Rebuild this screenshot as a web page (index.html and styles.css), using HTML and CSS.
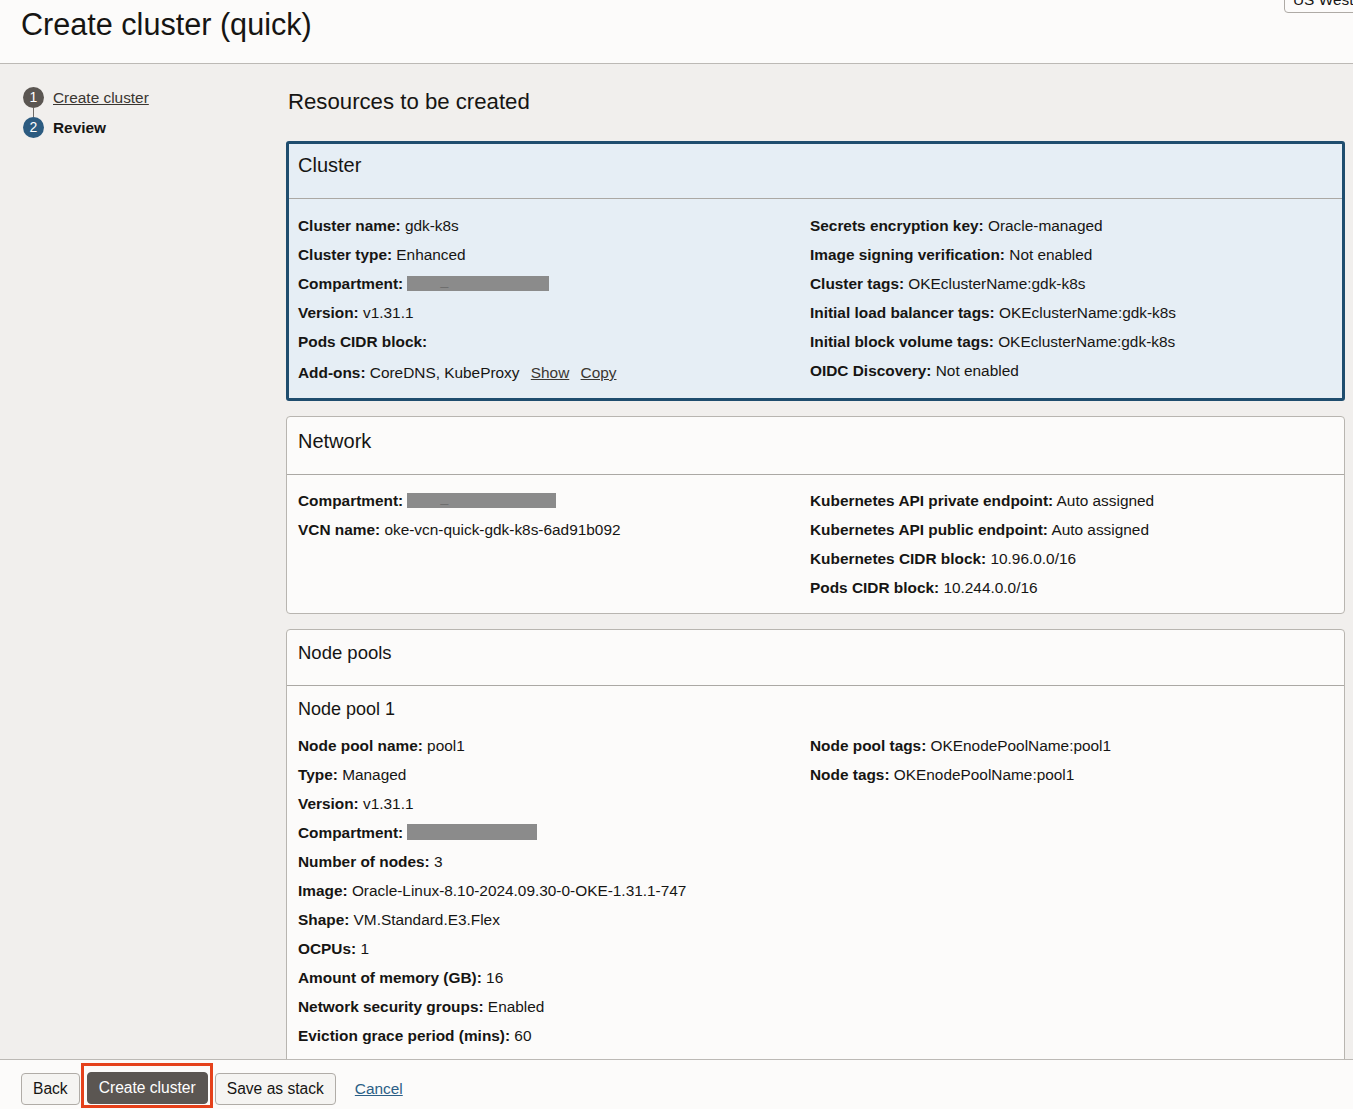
FILE: index.html
```html
<!DOCTYPE html>
<html lang="en">
<head>
<meta charset="utf-8">
<title>Create cluster (quick)</title>
<link rel="stylesheet" href="styles.css">
</head>
<body>
<header class="page-header">
  <h1 class="page-title">Create cluster (quick)</h1>
  <div class="region-select">US West (Phoenix)</div>
</header>
<div class="layout">
  <nav class="steps">
    <div class="step">
      <span class="step-num step-done">1</span>
      <a class="step-link" href="#">Create cluster</a>
    </div>
    <div class="step-line"></div>
    <div class="step">
      <span class="step-num step-current">2</span>
      <span class="step-active">Review</span>
    </div>
  </nav>
  <main class="content">
    <h2 class="section-title">Resources to be created</h2>

    <section class="panel panel-selected">
      <div class="panel-head">Cluster</div>
      <div class="panel-body grid">
        <div class="col">
          <div class="row"><b>Cluster name:</b> gdk-k8s</div>
          <div class="row"><b>Cluster type:</b> Enhanced</div>
          <div class="row"><b>Compartment:</b> <span class="redact redact-a"><span class="redact-mark">_</span></span></div>
          <div class="row"><b>Version:</b> v1.31.1</div>
          <div class="row"><b>Pods CIDR block:</b></div>
          <div class="row row-low"><b>Add-ons:</b> CoreDNS, KubeProxy <a class="mini-link" href="#">Show</a> <a class="mini-link" href="#">Copy</a></div>
        </div>
        <div class="col">
          <div class="row"><b>Secrets encryption key:</b> Oracle-managed</div>
          <div class="row"><b>Image signing verification:</b> Not enabled</div>
          <div class="row"><b>Cluster tags:</b> OKEclusterName:gdk-k8s</div>
          <div class="row"><b>Initial load balancer tags:</b> OKEclusterName:gdk-k8s</div>
          <div class="row"><b>Initial block volume tags:</b> OKEclusterName:gdk-k8s</div>
          <div class="row"><b>OIDC Discovery:</b> Not enabled</div>
        </div>
      </div>
    </section>

    <section class="panel panel-network">
      <div class="panel-head">Network</div>
      <div class="panel-body grid">
        <div class="col">
          <div class="row"><b>Compartment:</b> <span class="redact redact-b"><span class="redact-mark">_</span></span></div>
          <div class="row"><b>VCN name:</b> oke-vcn-quick-gdk-k8s-6ad91b092</div>
        </div>
        <div class="col">
          <div class="row"><b>Kubernetes API private endpoint:</b> Auto assigned</div>
          <div class="row"><b>Kubernetes API public endpoint:</b> Auto assigned</div>
          <div class="row"><b>Kubernetes CIDR block:</b> 10.96.0.0/16</div>
          <div class="row"><b>Pods CIDR block:</b> 10.244.0.0/16</div>
        </div>
      </div>
    </section>

    <section class="panel panel-pools">
      <div class="panel-head">Node pools</div>
      <div class="panel-body">
        <h3 class="sub-title">Node pool 1</h3>
        <div class="grid">
          <div class="col">
            <div class="row"><b>Node pool name:</b> pool1</div>
            <div class="row"><b>Type:</b> Managed</div>
            <div class="row"><b>Version:</b> v1.31.1</div>
            <div class="row"><b>Compartment:</b> <span class="redact redact-c"></span></div>
            <div class="row"><b>Number of nodes:</b> 3</div>
            <div class="row"><b>Image:</b> Oracle-Linux-8.10-2024.09.30-0-OKE-1.31.1-747</div>
            <div class="row"><b>Shape:</b> VM.Standard.E3.Flex</div>
            <div class="row"><b>OCPUs:</b> 1</div>
            <div class="row"><b>Amount of memory (GB):</b> 16</div>
            <div class="row"><b>Network security groups:</b> Enabled</div>
            <div class="row"><b>Eviction grace period (mins):</b> 60</div>
            <div class="row"><b>Force terminate after grace period:</b> Not enabled</div>
            <div class="row"><b>Kubernetes labels:</b> name:pool1</div>
          </div>
          <div class="col">
            <div class="row"><b>Node pool tags:</b> OKEnodePoolName:pool1</div>
            <div class="row"><b>Node tags:</b> OKEnodePoolName:pool1</div>
          </div>
        </div>
      </div>
    </section>
  </main>
</div>
<footer class="page-footer">
  <button class="btn" type="button">Back</button>
  <span class="highlight"><button class="btn btn-primary" type="button">Create cluster</button></span>
  <button class="btn" type="button">Save as stack</button>
  <a class="cancel-link" href="#">Cancel</a>
</footer>
</body>
</html>
```

FILE: styles.css
```css
* { box-sizing: border-box; }

html, body {
  margin: 0;
  height: 100%;
}

body {
  display: flex;
  flex-direction: column;
  overflow: hidden;
  background: #f1efed;
  color: #161513;
  font-family: "Liberation Sans", Arial, Helvetica, sans-serif;
  font-size: 15.4px;
}

.page-header {
  position: relative;
  height: 64px;
  flex: 0 0 64px;
  background: #fcfbfa;
  border-bottom: 1px solid #bcb9b5;
  padding: 6px 21px 0;
  overflow: hidden;
}

.page-title {
  margin: 0;
  font-size: 30.6px;
  font-weight: normal;
  line-height: 36px;
  color: #161513;
}

.region-select {
  position: absolute;
  top: -12px;
  left: 1284px;
  width: 140px;
  height: 25px;
  border: 1px solid #aeaaa5;
  border-radius: 4px;
  background: #fcfbfa;
  padding: 2px 8px 0;
  font-size: 15.4px;
  line-height: 18px;
  white-space: nowrap;
}

.layout {
  flex: 1 1 auto;
  display: flex;
  overflow: hidden;
  min-height: 0;
}

.steps {
  flex: 0 0 286px;
  padding: 23px 0 0 23px;
}

.step {
  display: flex;
  align-items: center;
  height: 21px;
}

.step-line {
  width: 1px;
  height: 9px;
  margin-left: 10px;
  background: #6f6a66;
}

.step-num {
  width: 21px;
  height: 21px;
  border-radius: 50%;
  color: #fff;
  font-size: 14px;
  line-height: 21px;
  text-align: center;
  margin-right: 9px;
}

.step-done { background: #5b5652; }
.step-current { background: #2c5b80; }

.step-link {
  color: #3a3631;
  text-decoration: underline;
}

.step-active {
  font-weight: bold;
}

.content {
  flex: 1 1 auto;
  padding: 24px 8px 0 0;
  min-width: 0;
}

.section-title {
  margin: 0 0 25px 2px;
  font-size: 22.2px;
  font-weight: normal;
  line-height: 28px;
}

.panel {
  background: #fcfbfa;
  border: 1px solid #b8b5b0;
  border-radius: 4px;
  margin-bottom: 15px;
}

.panel-selected {
  background: #e6eef5;
  border: 3px solid #1f4d6e;
  border-radius: 3px;
}

.panel-head {
  height: 58px;
  padding: 12px 11px 0;
  font-size: 20px;
  line-height: 24px;
  border-bottom: 1px solid #aba8a4;
}

.panel-selected .panel-head {
  height: 55px;
  padding: 9px 9px 0;
}

.panel-pools .panel-head {
  height: 56px;
  padding-top: 11px;
  font-size: 18.5px;
}

.panel-body {
  padding: 11px 11px 11px;
}

.panel-selected .panel-body {
  padding: 12px 9px 13px;
}

.panel-pools .panel-body {
  padding-top: 11px;
}

.grid {
  display: grid;
  grid-template-columns: 512px 1fr;
}

.row {
  line-height: 29px;
  white-space: nowrap;
}

.row b {
  font-weight: bold;
}

.row-low {
  position: relative;
  top: 2px;
}

.mini-link {
  color: #3a3631;
  text-decoration: underline;
  margin-left: 7px;
}

.redact {
  display: inline-block;
  position: relative;
  height: 15px;
  vertical-align: -2px;
  background: #8b8b8b;
}

.redact-mark {
  position: absolute;
  left: 33px;
  top: -3px;
  color: #6e6e6e;
  font-size: 14px;
  line-height: 15px;
}

.redact-a { width: 142px; }
.redact-b { width: 149px; }
.redact-c { width: 130px; height: 16px; }

.sub-title {
  margin: 0 0 10px;
  font-size: 18px;
  font-weight: normal;
  line-height: 24px;
}

.page-footer {
  flex: 0 0 50px;
  height: 50px;
  background: #fcfbfa;
  border-top: 1px solid #bcb9b5;
  display: flex;
  align-items: flex-start;
  padding: 13px 0 0 21px;
}

.btn {
  height: 32px;
  margin: 0;
  padding: 0 11px;
  font-family: "Liberation Sans", Arial, Helvetica, sans-serif;
  font-size: 15.6px;
  color: #161513;
  background: #f5f4f2;
  border: 1px solid #b0aca7;
  border-radius: 4px;
}

.highlight {
  display: inline-flex;
  margin: -10px 2px 0 1px;
  padding: 6px 2px 1px 3px;
  border: 3px solid #e5411b;
}

.btn-primary {
  background: #5b5652;
  border-color: #5b5652;
  color: #fff;
}

.cancel-link {
  margin-left: 19px;
  line-height: 32px;
  color: #2c5f86;
  text-decoration: underline;
}
```
